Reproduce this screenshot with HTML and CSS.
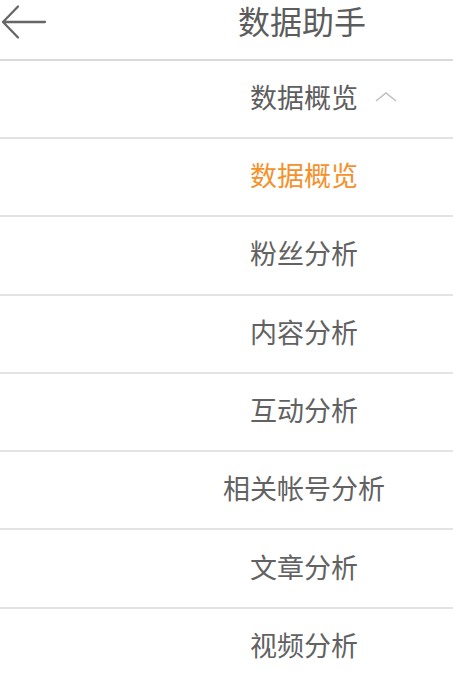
FILE: index.html
```html
<!DOCTYPE html>
<html lang="zh-CN">
<head>
<meta charset="utf-8">
<title>数据助手</title>
<link rel="stylesheet" href="styles.css">
</head>
<body>
<div class="page">
  <header class="topbar">
    <div class="back">
      <svg width="48" height="42" viewBox="0 0 48 42" aria-hidden="true">
        <path d="M45 22H3 M18 6.5L3 22L18 37.5" fill="none" stroke="#666" stroke-width="2.3" stroke-linecap="round" stroke-linejoin="round"/>
      </svg>
    </div>
    <h1 class="title">数据助手</h1>
  </header>
  <div class="dropdown">
    <span class="dropdown-label">数据概览
      <svg class="chev" width="22" height="10" viewBox="0 0 22 10" aria-hidden="true">
        <path d="M1 9L11 1L21 9" fill="none" stroke="#bdbdbd" stroke-width="1.4"/>
      </svg>
    </span>
  </div>
  <ul class="menu">
    <li class="item active">数据概览</li>
    <li class="item">粉丝分析</li>
    <li class="item">内容分析</li>
    <li class="item">互动分析</li>
    <li class="item">相关帐号分析</li>
    <li class="item">文章分析</li>
    <li class="item">视频分析</li>
  </ul>
</div>
</body>
</html>
```
FILE: styles.css
```css
html, body {
  margin: 0;
  padding: 0;
  background: #fff;
}
body {
  font-family: "Noto Sans CJK SC", "Noto Sans", sans-serif;
  color: #606060;
}
.page {
  width: 453px;
  overflow: hidden;
}
.topbar {
  display: grid;
  grid-template-columns: 151px 1fr;
  align-items: start;
  height: 59px;
  border-bottom: 2px solid #d9d9d9;
  box-sizing: content-box;
}
.back {
  height: 42px;
}
.back svg {
  display: block;
}
.title {
  margin: 0;
  padding-top: 2px;
  text-align: center;
  font-size: 32px;
  font-weight: 400;
  line-height: 36px;
  color: #5c5c5c;
}
.dropdown {
  height: 76px;
  border-bottom: 2px solid #e3e3e3;
  display: flex;
  align-items: center;
  justify-content: center;
  padding-left: 155px;
}
.dropdown-label {
  position: relative;
  font-size: 27px;
  line-height: 36px;
  color: #5e5e5e;
  margin-top: -4px;
}
.chev {
  position: absolute;
  left: calc(100% + 17px);
  top: 13px;
}
.menu {
  list-style: none;
  margin: 0;
  padding: 0;
}
.item {
  height: 78.3px;
  border-bottom: 2px solid #e3e3e3;
  display: flex;
  align-items: center;
  justify-content: center;
  padding-left: 155px;
  padding-bottom: 4px;
  box-sizing: border-box;
  font-size: 27px;
  line-height: 36px;
  color: #626262;
}
.item.active {
  color: #f5912b;
}
```
